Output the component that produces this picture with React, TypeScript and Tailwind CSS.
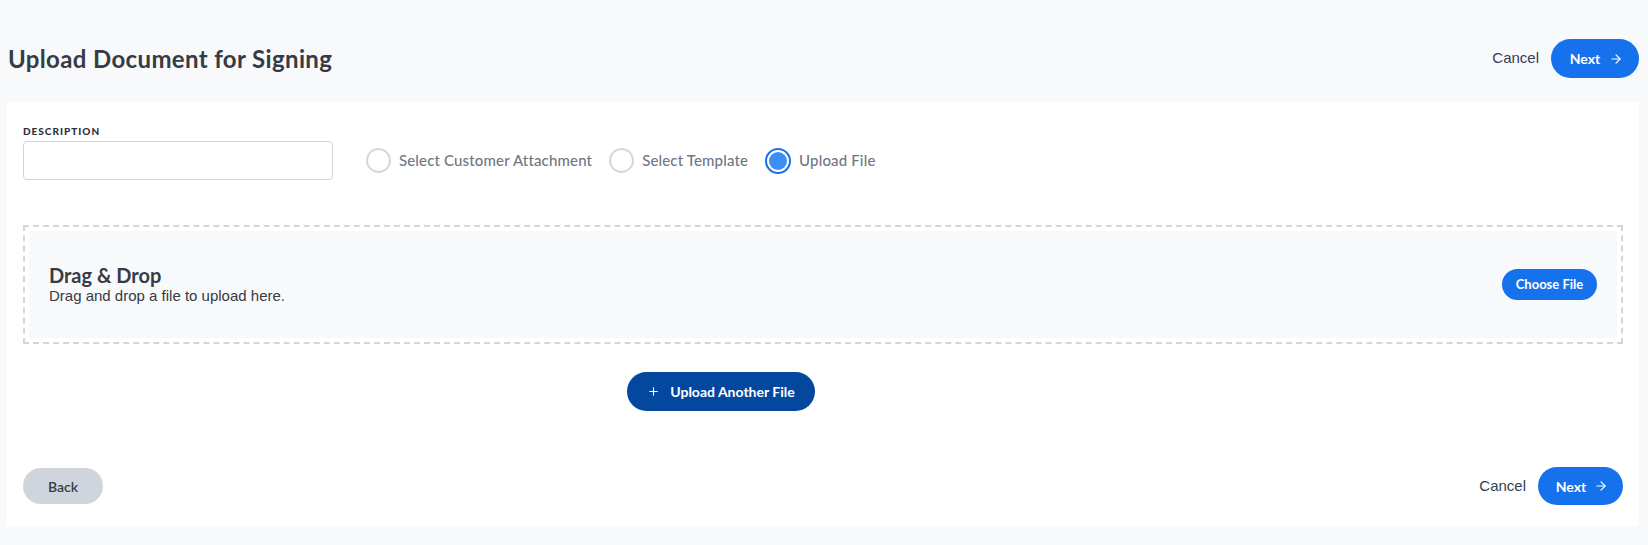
import { ArrowRight, Plus } from "lucide-react";

function NextButton({ big }: { big?: boolean }) {
  return (
    <button
      className={
        big
          ? "flex h-[39px] w-[88px] items-center justify-center gap-[9px] rounded-full bg-[#1672ec] pl-[3px] text-[14px] font-bold text-white"
          : "flex h-[38px] w-[85px] items-center justify-center gap-[8px] rounded-full bg-[#1672ec] pl-[3px] text-[14px] font-bold text-white"
      }
    >
      <span>Next</span>
      <ArrowRight className="h-[14px] w-[14px]" strokeWidth={2} />
    </button>
  );
}

function Radio({ label, checked }: { label: string; checked?: boolean }) {
  return (
    <label className="flex items-center gap-2">
      {checked ? (
        <span className="flex h-[26px] w-[26px] items-center justify-center rounded-full border-2 border-[#1672ec] bg-white">
          <span className="h-[18px] w-[18px] rounded-full bg-[#3a8ef6]" />
        </span>
      ) : (
        <span className="h-[25px] w-[25px] rounded-full border-2 border-[#d3d7de] bg-white" />
      )}
      <span className="text-[15px] font-medium tracking-[0.01em] text-[#707683]">{label}</span>
    </label>
  );
}

export default function App() {
  return (
    <div className="min-h-[545px] bg-[#f8f9fb] pl-[7px] pr-[9px] font-['Lato',sans-serif]">
      <div className="flex items-center justify-between pt-[39px] pb-[24px]">
        <h1 className="pl-px text-[24px] font-bold leading-none tracking-[0.015em] text-[#363b45]">
          Upload Document for Signing
        </h1>
        <div className="flex items-center gap-3">
          <button className="font-['Liberation_Sans',sans-serif] text-[15px] text-[#344054]">
            Cancel
          </button>
          <NextButton big />
        </div>
      </div>

      <div className="bg-white px-4 pt-[23px] pb-[21px]">
        <div className="flex items-end">
          <div className="flex flex-col">
            <span className="text-[10px] font-black uppercase leading-[12px] tracking-[0.1em] text-[#2d323c]">
              Description
            </span>
            <input className="mt-1 h-[39px] w-[310px] rounded border border-[#d0d5dd] bg-white px-3 outline-none" />
          </div>
          <div className="ml-[33px] flex h-[39px] items-center gap-[17px]">
            <Radio label="Select Customer Attachment" />
            <Radio label="Select Template" />
            <Radio label="Upload File" checked />
          </div>
        </div>

        <div className="mt-[45px] border-2 border-dashed border-[#d3d6dc] p-1">
          <div className="flex h-[107px] items-center justify-between bg-[#f8f9fb] px-5">
            <div className="flex flex-col">
              <span className="text-[20px] font-bold leading-[22px] text-[#363b45]">Drag &amp; Drop</span>
              <span className="font-['Liberation_Sans',sans-serif] text-[15px] leading-[20px] text-[#363b45]">
                Drag and drop a file to upload here.
              </span>
            </div>
            <button className="h-[31px] w-[95px] rounded-full bg-[#1672ec] text-[13px] font-bold text-white">
              Choose File
            </button>
          </div>
        </div>

        <div className="mt-[28px] flex">
          <button className="ml-[604px] flex h-[39px] w-[188px] items-center justify-center gap-[10px] rounded-full bg-[#03479f] text-[14px] font-bold text-white">
            <Plus className="h-[13px] w-[13px]" strokeWidth={2} />
            <span>Upload Another File</span>
          </button>
        </div>

        <div className="mt-[56px] flex items-center justify-between">
          <button className="h-[36px] w-[80px] rounded-full bg-[#d0d5dd] text-[14px] font-semibold text-[#363b45]">
            Back
          </button>
          <div className="flex items-center gap-3">
            <button className="font-['Liberation_Sans',sans-serif] text-[15px] text-[#344054]">
              Cancel
            </button>
            <NextButton />
          </div>
        </div>
      </div>
    </div>
  );
}
